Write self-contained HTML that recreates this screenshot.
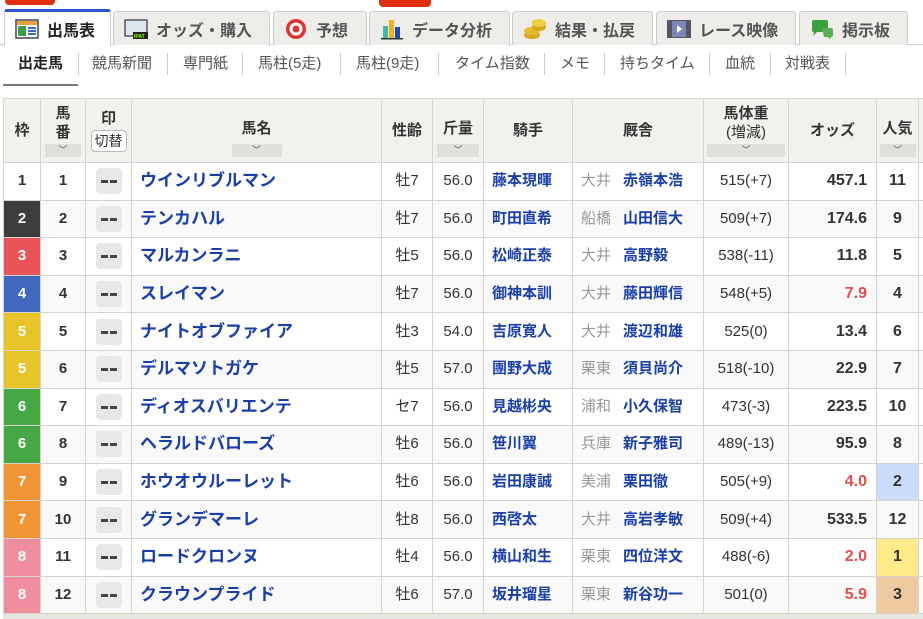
<!DOCTYPE html>
<html><head><meta charset="utf-8"><style>
*{box-sizing:border-box;margin:0;padding:0}
body{width:923px;height:619px;overflow:hidden;background:#fff;font-family:"Liberation Sans","Noto Sans CJK JP",sans-serif;color:#333;position:relative}
.badge{position:absolute;background:#e03010;border-radius:0 0 4px 4px}
.tabline{position:absolute;left:0;top:44px;width:923px;height:1px;background:#ccc}
.tab{position:absolute;top:11px;height:34px;background:#eeede9;border:1px solid #ccc;border-bottom:none;border-radius:3px 3px 0 0;font-size:16px;font-weight:bold;color:#555;display:flex;align-items:center;padding-left:10px;gap:8px}
.tab.act{top:9px;height:37px;background:#fff;border-top:3px solid #2a55c8;color:#222;z-index:2}
.ic{width:24px;height:22px;display:inline-block;flex:none}
.sub{position:absolute;top:52px;height:24px;font-size:15px;color:#555;line-height:24px}
.sep{position:absolute;top:53px;width:1px;height:22px;background:#ccc}
table{position:absolute;left:3px;top:98px;border-collapse:collapse;table-layout:fixed;width:925px}
td,th{border:1px solid #d6d4cc;text-align:center;font-size:15px;overflow:hidden;white-space:nowrap;vertical-align:middle}
th{background:#f2f1ed;font-weight:bold;color:#333;height:64px;line-height:19px}
.sort{display:block;margin:2px auto 0;height:13px;background:#e0dfda;font-size:9px;color:#555;line-height:13px;font-weight:normal}
td{height:37.6px;line-height:20px;padding:0}
tr.e td{background:#f9f9f9}
.wk{font-weight:bold;color:#fff}
.num{font-weight:bold}
.mk{display:inline-block;width:26px;height:26px;background:#e8e8e8;border-radius:4px;vertical-align:middle;position:relative}
.mk:before,.mk:after{content:"";position:absolute;top:12px;width:7px;height:3px;background:#444}
.mk:before{left:5px}.mk:after{left:14px}
.nm{text-align:left;padding-left:8px;font-size:17px;font-weight:bold;color:#1a3faa}
.jk{text-align:left;padding-left:8px;font-weight:bold;color:#1a3faa}
.tr{text-align:left;padding-left:8px}
.tr span{color:#999;margin-right:12px}
.tr b{color:#1a3faa}
.od{text-align:right;padding-right:9px;font-weight:bold;font-size:16px}
.red{color:#e05050}
.pp{font-weight:bold;font-size:16px}
.kiri{display:inline-block;border:1px solid #bbb;border-radius:4px;background:#fff;font-weight:normal;font-size:14px;padding:0 3px;line-height:20px;margin-top:2px}
</style></head><body>
<div class="badge" style="left:5px;top:0;width:50px;height:5px"></div>
<div class="badge" style="left:379px;top:0;width:52px;height:7px"></div>
<div class="tabline"></div>
<div class="tab act" style="left:4px;width:107px;padding-left:10px"><svg class="ic" viewBox="0 0 24 22"><rect x="1" y="2" width="22" height="18" fill="#fff" stroke="#445" stroke-width="1.5"/><rect x="2" y="3" width="20" height="4" fill="#e9a23b"/><rect x="3" y="8" width="8" height="10" fill="#3aa04a"/><rect x="13" y="9" width="8" height="2" fill="#3a6cc0"/><rect x="13" y="12" width="8" height="2" fill="#3a6cc0"/><rect x="13" y="15" width="8" height="2" fill="#3a6cc0"/></svg>出馬表</div>
<div class="tab" style="left:113px;width:157px"><svg class="ic" viewBox="0 0 24 22"><rect x="1" y="2" width="22" height="16" fill="#dde4ee" stroke="#556" stroke-width="1.5"/><rect x="9" y="14" width="15" height="7" fill="#222"/><text x="10" y="20" font-size="5" fill="#8f0" font-family="Liberation Sans" font-weight="bold">IPAT</text></svg>オッズ・購入</div>
<div class="tab" style="left:273px;width:94px"><svg class="ic" viewBox="0 0 24 22"><circle cx="12" cy="11" r="10" fill="#d33"/><circle cx="12" cy="11" r="6.5" fill="#fff"/><circle cx="12" cy="11" r="3.5" fill="#d33"/></svg>予想</div>
<div class="tab" style="left:369px;width:141px"><svg class="ic" viewBox="0 0 24 22"><rect x="3" y="8" width="5" height="13" fill="#3cb8b0"/><rect x="9" y="2" width="5" height="19" fill="#f2b020"/><rect x="15" y="9" width="5" height="12" fill="#2449a8"/><rect x="1" y="20" width="22" height="1.5" fill="#333"/></svg>データ分析</div>
<div class="tab" style="left:512px;width:141px"><svg class="ic" viewBox="0 0 24 22"><ellipse cx="9" cy="17" rx="8" ry="4" fill="#d9a820"/><ellipse cx="9" cy="13" rx="8" ry="4" fill="#e6bb30"/><ellipse cx="16" cy="9" rx="7" ry="4" fill="#d9a820"/><ellipse cx="16" cy="5" rx="7" ry="4" fill="#efcc40"/></svg>結果・払戻</div>
<div class="tab" style="left:656px;width:140px"><svg class="ic" viewBox="0 0 24 22"><rect x="0" y="2" width="24" height="18" fill="#556"/><rect x="5" y="3" width="14" height="16" fill="#7a86b8"/><path d="M10 7 L15 11 L10 15Z" fill="#fff"/></svg>レース映像</div>
<div class="tab" style="left:799px;width:109px"><svg class="ic" viewBox="0 0 24 22"><path d="M2 4 Q2 2 4 2 L16 2 Q18 2 18 4 L18 12 Q18 14 16 14 L7 14 L3 18 L4 14 Q2 14 2 12Z" fill="#3aa040"/><path d="M12 10 L21 10 Q23 10 23 12 L23 17 Q23 19 21 19 L20 21 L18 19 L14 19Z" fill="#55b050"/></svg>掲示板</div>

<div class="sub" style="left:18px;color:#222;font-weight:bold">出走馬</div>
<div style="position:absolute;left:3px;top:84px;width:75px;height:2px;background:#777"></div>
<div class="sep" style="left:78px"></div>
<div class="sub" style="left:92px">競馬新聞</div><div class="sep" style="left:167px"></div>
<div class="sub" style="left:183px">専門紙</div><div class="sep" style="left:242px"></div>
<div class="sub" style="left:258px">馬柱(5走)</div><div class="sep" style="left:340px"></div>
<div class="sub" style="left:356px">馬柱(9走)</div><div class="sep" style="left:438px"></div>
<div class="sub" style="left:455px">タイム指数</div><div class="sep" style="left:544px"></div>
<div class="sub" style="left:560px">メモ</div><div class="sep" style="left:604px"></div>
<div class="sub" style="left:620px">持ちタイム</div><div class="sep" style="left:709px"></div>
<div class="sub" style="left:725px">血統</div><div class="sep" style="left:770px"></div>
<div class="sub" style="left:785px">対戦表</div><div class="sep" style="left:845px"></div>

<table>
<colgroup><col style="width:37px"><col style="width:45px"><col style="width:46px"><col style="width:250px"><col style="width:51px"><col style="width:51px"><col style="width:89px"><col style="width:131px"><col style="width:85px"><col style="width:88px"><col style="width:42px"><col style="width:10px"></colgroup>
<tr><th>枠</th><th>馬<br>番<span class="sort" style="width:36px">﹀</span></th><th>印<br><span class="kiri">切替</span></th><th><span style="display:block;margin-top:14px">馬名</span><span class="sort" style="width:50px;margin-top:6px">﹀</span></th><th>性齢</th><th><span style="display:block;margin-top:14px">斤量</span><span class="sort" style="width:42px;margin-top:6px">﹀</span></th><th>騎手</th><th>厩舎</th><th>馬体重<br><span style="font-weight:normal">(増減)</span><span class="sort" style="width:78px">﹀</span></th><th>オッズ</th><th><span style="display:block;margin-top:14px">人気</span><span class="sort" style="width:36px;margin-top:6px">﹀</span></th><th></th></tr>
<tr><td class="wk" style="color:#333">1</td><td class="num">1</td><td><span class="mk"></span></td><td class="nm">ウインリブルマン</td><td>牡7</td><td>56.0</td><td class="jk">藤本現暉</td><td class="tr"><span>大井</span><b>赤嶺本浩</b></td><td>515(+7)</td><td class="od">457.1</td><td class="pp">11</td><td></td></tr>
<tr class="e"><td class="wk" style="background:#3d3d3d">2</td><td class="num">2</td><td><span class="mk"></span></td><td class="nm">テンカハル</td><td>牡7</td><td>56.0</td><td class="jk">町田直希</td><td class="tr"><span>船橋</span><b>山田信大</b></td><td>509(+7)</td><td class="od">174.6</td><td class="pp">9</td><td></td></tr>
<tr><td class="wk" style="background:#e8545a">3</td><td class="num">3</td><td><span class="mk"></span></td><td class="nm">マルカンラニ</td><td>牡5</td><td>56.0</td><td class="jk">松崎正泰</td><td class="tr"><span>大井</span><b>高野毅</b></td><td>538(-11)</td><td class="od">11.8</td><td class="pp">5</td><td></td></tr>
<tr class="e"><td class="wk" style="background:#4069bd">4</td><td class="num">4</td><td><span class="mk"></span></td><td class="nm">スレイマン</td><td>牡7</td><td>56.0</td><td class="jk">御神本訓</td><td class="tr"><span>大井</span><b>藤田輝信</b></td><td>548(+5)</td><td class="od red">7.9</td><td class="pp">4</td><td></td></tr>
<tr><td class="wk" style="background:#e6c42a">5</td><td class="num">5</td><td><span class="mk"></span></td><td class="nm">ナイトオブファイア</td><td>牡3</td><td>54.0</td><td class="jk">吉原寛人</td><td class="tr"><span>大井</span><b>渡辺和雄</b></td><td>525(0)</td><td class="od">13.4</td><td class="pp">6</td><td></td></tr>
<tr class="e"><td class="wk" style="background:#e6c42a">5</td><td class="num">6</td><td><span class="mk"></span></td><td class="nm">デルマソトガケ</td><td>牡5</td><td>57.0</td><td class="jk">團野大成</td><td class="tr"><span>栗東</span><b>須貝尚介</b></td><td>518(-10)</td><td class="od">22.9</td><td class="pp">7</td><td></td></tr>
<tr><td class="wk" style="background:#45a845">6</td><td class="num">7</td><td><span class="mk"></span></td><td class="nm">ディオスバリエンテ</td><td>セ7</td><td>56.0</td><td class="jk">見越彬央</td><td class="tr"><span>浦和</span><b>小久保智</b></td><td>473(-3)</td><td class="od">223.5</td><td class="pp">10</td><td></td></tr>
<tr class="e"><td class="wk" style="background:#45a845">6</td><td class="num">8</td><td><span class="mk"></span></td><td class="nm">ヘラルドバローズ</td><td>牡6</td><td>56.0</td><td class="jk">笹川翼</td><td class="tr"><span>兵庫</span><b>新子雅司</b></td><td>489(-13)</td><td class="od">95.9</td><td class="pp">8</td><td></td></tr>
<tr><td class="wk" style="background:#ef9536">7</td><td class="num">9</td><td><span class="mk"></span></td><td class="nm">ホウオウルーレット</td><td>牡6</td><td>56.0</td><td class="jk">岩田康誠</td><td class="tr"><span>美浦</span><b>栗田徹</b></td><td>505(+9)</td><td class="od red">4.0</td><td class="pp" style="background:#c9dcf9">2</td><td></td></tr>
<tr class="e"><td class="wk" style="background:#ef9536">7</td><td class="num">10</td><td><span class="mk"></span></td><td class="nm">グランデマーレ</td><td>牡8</td><td>56.0</td><td class="jk">西啓太</td><td class="tr"><span>大井</span><b>高岩孝敏</b></td><td>509(+4)</td><td class="od">533.5</td><td class="pp">12</td><td></td></tr>
<tr><td class="wk" style="background:#f08ea0">8</td><td class="num">11</td><td><span class="mk"></span></td><td class="nm">ロードクロンヌ</td><td>牡4</td><td>56.0</td><td class="jk">横山和生</td><td class="tr"><span>栗東</span><b>四位洋文</b></td><td>488(-6)</td><td class="od red">2.0</td><td class="pp" style="background:#fdec88">1</td><td></td></tr>
<tr class="e"><td class="wk" style="background:#f08ea0">8</td><td class="num">12</td><td><span class="mk"></span></td><td class="nm">クラウンプライド</td><td>牡6</td><td>57.0</td><td class="jk">坂井瑠星</td><td class="tr"><span>栗東</span><b>新谷功一</b></td><td>501(0)</td><td class="od red">5.9</td><td class="pp" style="background:#efc9a0">3</td><td></td></tr>
</table>
<div style="position:absolute;left:3px;top:614px;width:923px;height:5px;background:#e6e5e0"></div>
</body></html>
